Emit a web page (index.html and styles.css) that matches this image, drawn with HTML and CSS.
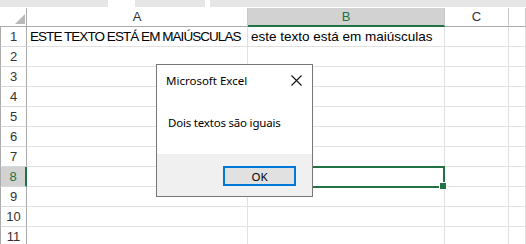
FILE: index.html
```html
<!DOCTYPE html>
<html lang="pt">
<head>
  <meta charset="UTF-8" />
  <title>Excel - MsgBox</title>
  <link rel="stylesheet" href="styles.css">
</head>
<body>

<div class="topbar">
  <span class="seg seg-a"></span>
  <span class="seg seg-b"></span>
  <span class="seg seg-c"></span>
</div>

<div class="sheet">
  <div class="hdr corner">
    <svg width="27" height="19" viewBox="0 0 27 19"><polygon points="15,16 25,16 25,6" fill="#b9b9b9"/></svg>
  </div>
  <div class="hdr">A</div>
  <div class="hdr active-col">B</div>
  <div class="hdr">C</div>
  <div class="hdr"></div>

  <div class="rowhdr">1</div>
  <div class="cell caps">ESTE TEXTO ESTÁ EM MAIÚSCULAS</div>
  <div class="cell">este texto está em maiúsculas</div>
  <div class="cell"></div><div class="cell"></div>

  <div class="rowhdr">2</div><div class="cell"></div><div class="cell"></div><div class="cell"></div><div class="cell"></div>
  <div class="rowhdr">3</div><div class="cell"></div><div class="cell"></div><div class="cell"></div><div class="cell"></div>
  <div class="rowhdr">4</div><div class="cell"></div><div class="cell"></div><div class="cell"></div><div class="cell"></div>
  <div class="rowhdr">5</div><div class="cell"></div><div class="cell"></div><div class="cell"></div><div class="cell"></div>
  <div class="rowhdr">6</div><div class="cell"></div><div class="cell"></div><div class="cell"></div><div class="cell"></div>
  <div class="rowhdr">7</div><div class="cell"></div><div class="cell"></div><div class="cell"></div><div class="cell"></div>
  <div class="rowhdr active-row">8</div><div class="cell"></div><div class="cell"></div><div class="cell"></div><div class="cell"></div>
  <div class="rowhdr">9</div><div class="cell"></div><div class="cell"></div><div class="cell"></div><div class="cell"></div>
  <div class="rowhdr">10</div><div class="cell"></div><div class="cell"></div><div class="cell"></div><div class="cell"></div>
  <div class="rowhdr">11</div><div class="cell"></div><div class="cell"></div><div class="cell"></div><div class="cell"></div>
</div>

<!-- active cell B8 -->
<div class="selection"><span class="handle"></span></div>

<div class="dialog">
  <div class="dialog-title">
    <span>Microsoft Excel</span>
    <svg class="close" width="11" height="11" viewBox="0 0 11 11"><path d="M0.5 0.5 L10.5 10.5 M10.5 0.5 L0.5 10.5" stroke="#111" stroke-width="1.1"/></svg>
  </div>
  <div class="dialog-msg">Dois textos são iguais</div>
  <div class="dialog-foot">
    <button class="ok">OK</button>
  </div>
</div>

</body>
</html>
```

FILE: styles.css
```css
body {
  margin: 0;
  width: 526px;
  height: 244px;
  overflow: hidden;
  background: #fff;
  font-family: "Liberation Sans", Arial, sans-serif;
  position: relative;
}
.topbar {
  height: 8px;
  display: flex;
  background: #fff;
}
.seg {
  display: block;
  height: 7px;
  background: #e6e6e6;
}
.seg-a { width: 108px; }
.seg-b { width: 70px; margin-left: 27px; }
.seg-c { flex: 1; margin-left: 5px; }

.sheet {
  display: grid;
  grid-template-columns: 27px 221px 197px 64px 1fr;
  grid-template-rows: 19px repeat(11, 20px);
}
.hdr, .rowhdr, .cell {
  box-sizing: border-box;
}
.hdr {
  border-right: 1px solid #c8c8c8;
  border-bottom: 1px solid #ababab;
  font-size: 13px;
  color: #333;
  text-align: center;
  line-height: 18px;
}
.corner {
  border-right: 1px solid #ababab;
}
.corner svg {
  display: block;
}
.active-col {
  background: #d2d2d2;
  color: #217346;
  border-bottom: 2px solid #217346;
}
.rowhdr {
  border-left: 1px solid #ababab;
  border-right: 1px solid #ababab;
  border-bottom: 1px solid #d8d8d8;
  font-size: 13px;
  color: #333;
  text-align: center;
  line-height: 20px;
}
.active-row {
  background: #d2d2d2;
  color: #217346;
  border-right: 2px solid #217346;
}
.cell {
  border-right: 1px solid #e1e1e1;
  border-bottom: 1px solid #e1e1e1;
  font-size: 13.5px;
  color: #000;
  line-height: 20px;
  padding-left: 3px;
  white-space: nowrap;
}
.caps {
  letter-spacing: -0.95px;
}

.selection {
  position: absolute;
  left: 246px;
  top: 166px;
  width: 199px;
  height: 22px;
  box-sizing: border-box;
  border: 2px solid #217346;
}
.handle {
  position: absolute;
  right: -4px;
  bottom: -4px;
  width: 6px;
  height: 6px;
  background: #217346;
  border: 1px solid #fff;
}

.dialog {
  position: absolute;
  left: 156px;
  top: 64px;
  width: 157px;
  height: 133px;
  box-sizing: border-box;
  border: 1px solid #777;
  background: #fff;
  font-family: "Noto Sans", "Open Sans", sans-serif;
  font-size: 11.5px;
  color: #000;
  display: flex;
  flex-direction: column;
}
.dialog-title {
  height: 28px;
  display: flex;
  align-items: center;
  justify-content: space-between;
  padding: 0 10px 0 9px;
  margin-top: 1px;
}
.close {
  display: block;
  margin-top: 1px;
}
.dialog-msg {
  flex: 1;
  padding: 21px 0 0 11px;
  letter-spacing: -0.2px;
}
.dialog-foot {
  height: 42px;
  background: #f0f0f0;
  display: flex;
  justify-content: flex-end;
  align-items: flex-start;
  padding: 12px 16px 0 0;
  box-sizing: border-box;
}
.ok {
  width: 73px;
  height: 20px;
  box-sizing: border-box;
  border: 2px solid #0078d7;
  background: #e1e1e1;
  font-family: "Noto Sans", "Open Sans", sans-serif;
  font-size: 11.5px;
  color: #000;
  padding: 0;
  line-height: 15px;
}
```
